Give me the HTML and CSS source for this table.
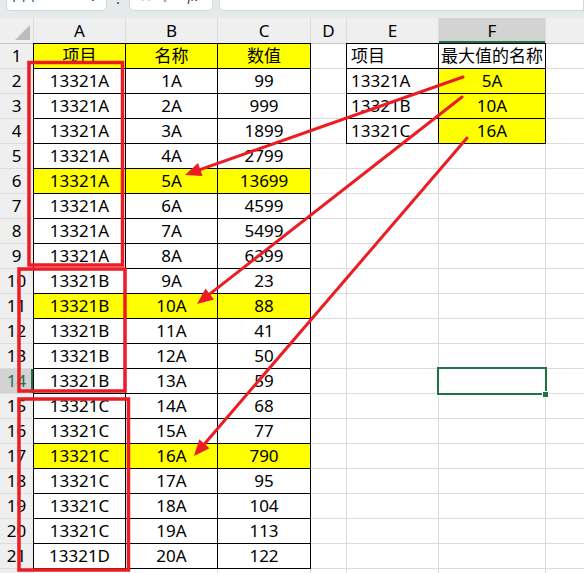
FILE: index.html
```html
<!DOCTYPE html>
<html lang="zh">
<head>
<meta charset="utf-8">
<title>Sheet</title>
<link rel="stylesheet" href="styles.css">
</head>
<body>
<div class="app">
  <div class="topbar">
    <div class="box namebox"><span class="nb-text">F14</span><span class="nb-caret">⌄</span></div>
    <div class="dots">⋮</div>
    <div class="box fxbox"><span>✕</span><span>✓</span><span class="fx">fx</span></div>
    <div class="box formula"></div>
  </div>
  <div class="sheet">
    <div class="corner"><span class="tri"></span></div><div class="ch">A</div><div class="ch">B</div><div class="ch">C</div><div class="ch">D</div><div class="ch">E</div><div class="ch sel">F</div><div class="ch"></div>

    <div class="rh">1</div><div class="c t y">项目</div><div class="c t y">名称</div><div class="c t y">数值</div><div class="c"></div><div class="c t l">项目</div><div class="c t">最大值的名称</div><div class="c"></div>
    <div class="rh">2</div><div class="c t">13321A</div><div class="c t">1A</div><div class="c t">99</div><div class="c"></div><div class="c t l">13321A</div><div class="c t y">5A</div><div class="c"></div>
    <div class="rh">3</div><div class="c t">13321A</div><div class="c t">2A</div><div class="c t">999</div><div class="c"></div><div class="c t l">13321B</div><div class="c t y">10A</div><div class="c"></div>
    <div class="rh">4</div><div class="c t">13321A</div><div class="c t">3A</div><div class="c t">1899</div><div class="c"></div><div class="c t l">13321C</div><div class="c t y">16A</div><div class="c"></div>
    <div class="rh">5</div><div class="c t">13321A</div><div class="c t">4A</div><div class="c t">2799</div><div class="c"></div><div class="c"></div><div class="c"></div><div class="c"></div>
    <div class="rh">6</div><div class="c t y">13321A</div><div class="c t y">5A</div><div class="c t y">13699</div><div class="c"></div><div class="c"></div><div class="c"></div><div class="c"></div>
    <div class="rh">7</div><div class="c t">13321A</div><div class="c t">6A</div><div class="c t">4599</div><div class="c"></div><div class="c"></div><div class="c"></div><div class="c"></div>
    <div class="rh">8</div><div class="c t">13321A</div><div class="c t">7A</div><div class="c t">5499</div><div class="c"></div><div class="c"></div><div class="c"></div><div class="c"></div>
    <div class="rh">9</div><div class="c t">13321A</div><div class="c t">8A</div><div class="c t">6399</div><div class="c"></div><div class="c"></div><div class="c"></div><div class="c"></div>
    <div class="rh">10</div><div class="c t">13321B</div><div class="c t">9A</div><div class="c t">23</div><div class="c"></div><div class="c"></div><div class="c"></div><div class="c"></div>
    <div class="rh">11</div><div class="c t y">13321B</div><div class="c t y">10A</div><div class="c t y">88</div><div class="c"></div><div class="c"></div><div class="c"></div><div class="c"></div>
    <div class="rh">12</div><div class="c t">13321B</div><div class="c t">11A</div><div class="c t">41</div><div class="c"></div><div class="c"></div><div class="c"></div><div class="c"></div>
    <div class="rh">13</div><div class="c t">13321B</div><div class="c t">12A</div><div class="c t">50</div><div class="c"></div><div class="c"></div><div class="c"></div><div class="c"></div>
    <div class="rh sel">14</div><div class="c t">13321B</div><div class="c t">13A</div><div class="c t">59</div><div class="c"></div><div class="c"></div><div class="c active"><span class="handle"></span></div><div class="c"></div>
    <div class="rh">15</div><div class="c t">13321C</div><div class="c t">14A</div><div class="c t">68</div><div class="c"></div><div class="c"></div><div class="c"></div><div class="c"></div>
    <div class="rh">16</div><div class="c t">13321C</div><div class="c t">15A</div><div class="c t">77</div><div class="c"></div><div class="c"></div><div class="c"></div><div class="c"></div>
    <div class="rh">17</div><div class="c t y">13321C</div><div class="c t y">16A</div><div class="c t y">790</div><div class="c"></div><div class="c"></div><div class="c"></div><div class="c"></div>
    <div class="rh">18</div><div class="c t">13321C</div><div class="c t">17A</div><div class="c t">95</div><div class="c"></div><div class="c"></div><div class="c"></div><div class="c"></div>
    <div class="rh">19</div><div class="c t">13321C</div><div class="c t">18A</div><div class="c t">104</div><div class="c"></div><div class="c"></div><div class="c"></div><div class="c"></div>
    <div class="rh">20</div><div class="c t">13321C</div><div class="c t">19A</div><div class="c t">113</div><div class="c"></div><div class="c"></div><div class="c"></div><div class="c"></div>
    <div class="rh">21</div><div class="c t">13321D</div><div class="c t">20A</div><div class="c t">122</div><div class="c"></div><div class="c"></div><div class="c"></div><div class="c"></div>
    <div class="rh">22</div><div class="c"></div><div class="c"></div><div class="c"></div><div class="c"></div><div class="c"></div><div class="c"></div><div class="c"></div>
  </div>
  <svg class="overlay" width="584" height="573" viewBox="0 0 584 573">
    <g fill="none" stroke="#ec1c24" stroke-width="3.5">
      <rect x="29" y="62.5" width="93.5" height="202.5"/>
      <rect x="19" y="269" width="106" height="122"/>
      <rect x="19" y="399" width="109.5" height="171"/>
    </g>
    <g stroke="#ec1c24" stroke-width="3" stroke-linecap="round">
      <line x1="463" y1="77" x2="200" y2="169.7"/>
      <line x1="462" y1="97" x2="209.6" y2="294.1"/>
      <line x1="467" y1="138" x2="204.4" y2="443.9"/>
    </g>
    <g fill="#ec1c24">
      <polygon points="185,175 202.6,176 198,163"/>
      <polygon points="197,304 214,299.5 205.5,288.5"/>
      <polygon points="194,456 209.5,448.3 199.3,439.3"/>
    </g>
  </svg>
</div>
</body>
</html>
```

FILE: styles.css
```css
* { box-sizing: border-box; }
html, body {
  margin: 0;
  padding: 0;
  background: #ffffff;
  overflow: hidden;
}
.app {
  position: relative;
  width: 584px;
  height: 573px;
  overflow: hidden;
  font-family: "Noto Sans", "Noto Sans CJK SC", sans-serif;
  font-size: 17px;
  color: #000;
}
.topbar {
  height: 18px;
  background: #e5eaea;
  display: flex;
  align-items: flex-start;
  padding-left: 6px;
  overflow: hidden;
}
.box {
  background: #fff;
  border: 1px solid #d3d6d6;
  border-top: none;
  border-radius: 0 0 5px 5px;
  height: 11px;
  overflow: hidden;
  display: flex;
  align-items: flex-end;
  font-size: 14px;
  line-height: 14px;
}
.namebox {
  width: 101px;
  justify-content: space-between;
  padding: 0 8px 0 5px;
}
.nb-text { color: #1a56b8; margin-bottom: 6px; }
.nb-caret { color: #333; margin-bottom: 6px; font-size: 12px; }
.dots {
  width: 22px;
  text-align: center;
  font-size: 14px;
  line-height: 6px;
  color: #444;
  overflow: hidden;
  height: 6px;
}
.fxbox {
  width: 84px;
  padding: 0 8px 0 10px;
  gap: 10px;
  color: #9a9a9a;
}
.fxbox span { margin-bottom: 6px; }
.fxbox .fx { color: #333; font-style: italic; font-family: "Liberation Serif", serif; margin-left: 6px; }
.formula {
  margin-left: 6px;
  flex: 1;
  border-radius: 0 0 0 5px;
}
.sheet {
  display: grid;
  grid-template-columns: 33px 91px 91px 92px 35px 91px 106px 1fr;
  grid-template-rows: 25px repeat(22, 24px);
  column-gap: 1px;
  row-gap: 1px;
  background: #dcdcdc;
}
.corner {
  background: #efefef;
  position: relative;
  display: flex;
  align-items: flex-end;
  justify-content: flex-end;
  padding: 0 3px 3px 0;
  box-shadow: 0 1px 0 #c8c8c8;
}
.tri {
  width: 0;
  height: 0;
  border-left: 15px solid transparent;
  border-bottom: 15px solid #bcbcbc;
}
.ch {
  background: #efefef;
  text-align: center;
  line-height: 25px;
  box-shadow: 0 1px 0 #c8c8c8;
}
.ch.sel {
  background: #d3d3d3;
  box-shadow: inset 0 -2px 0 #217346;
}
.rh {
  background: #efefef;
  text-align: center;
  line-height: 24px;
}
.rh.sel {
  background: #d3d3d3;
  color: #217346;
  box-shadow: inset -2px 0 0 #217346;
}
.c {
  background: #ffffff;
  text-align: center;
  line-height: 24px;
  white-space: nowrap;
  overflow: visible;
}
.c.t { box-shadow: 0 0 0 1px #000000; }
.c.y { background: #ffff00; }
.c.l { text-align: left; padding-left: 4px; }
.c.active {
  position: relative;
  z-index: 1;
  box-shadow: 0 0 0 2px #217346;
}
.handle {
  position: absolute;
  right: -4px;
  bottom: -5px;
  width: 7px;
  height: 7px;
  background: #217346;
  border: 1px solid #ffffff;
}
.overlay {
  position: absolute;
  left: 0;
  top: 0;
  pointer-events: none;
}
```
